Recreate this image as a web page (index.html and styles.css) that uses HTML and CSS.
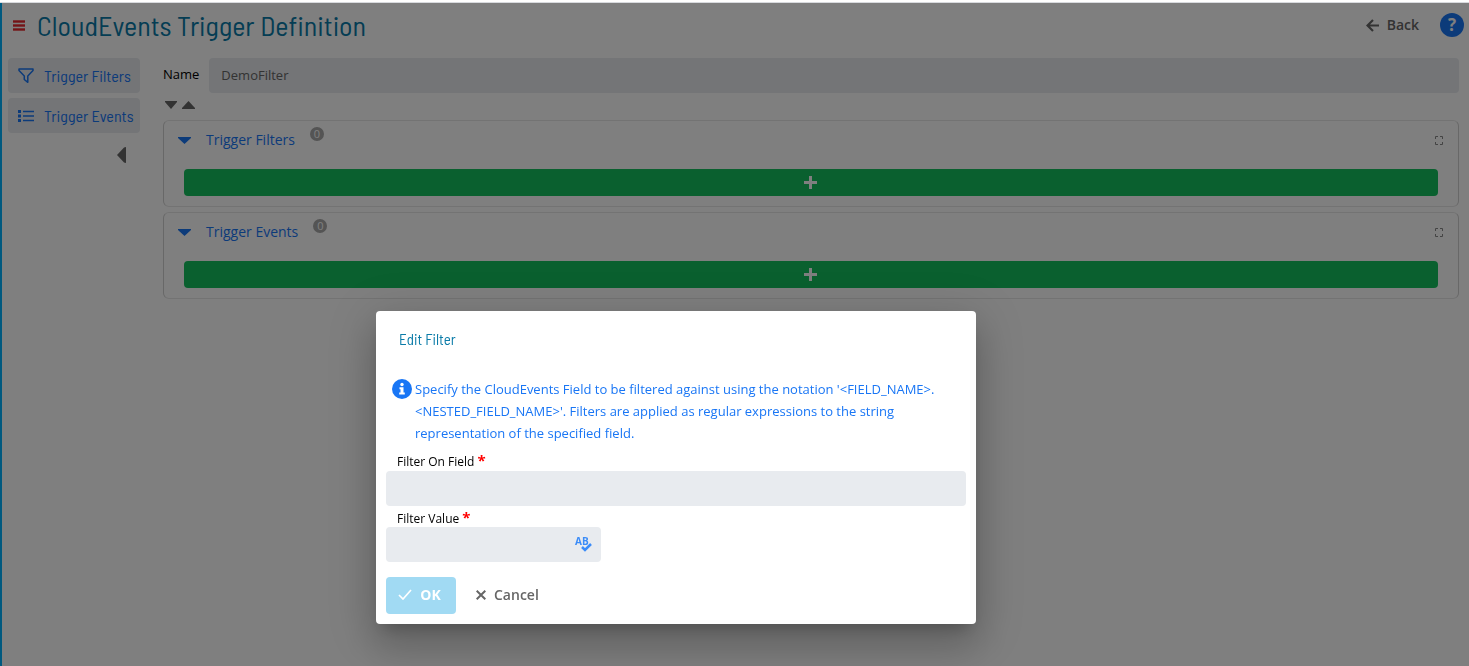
FILE: index.html
```html
<!DOCTYPE html>
<html lang="en">
<head>
<meta charset="utf-8">
<title>CloudEvents Trigger Definition</title>
<link rel="stylesheet" href="styles.css">
</head>
<body>
<div class="page">
  <header class="header">
    <button class="menu" type="button" aria-label="Menu">
      <svg width="12" height="12" viewBox="0 0 12 12"><path d="M0 2.500h12M0 6.500h12M0 10.500h12" stroke="#f08080" stroke-width="3"/><path d="M0 2.500h12M0 6.500h12M0 10.500h12" stroke="#e8262e" stroke-width="1.500"/></svg>
    </button>
    <h1 class="title">CloudEvents Trigger Definition</h1>
    <button class="back" type="button">
      <svg width="13" height="14" viewBox="0 0 13 14" fill="none" stroke="currentColor" stroke-width="2.200"><path d="M7 2L1.500 7.500L7 13M1.500 7.500H13"/></svg>
      Back
    </button>
    <button class="help" type="button" aria-label="Help">?</button>
  </header>
  <div class="body">
    <nav class="sidebar">
      <a class="nav" href="#filters">
        <svg width="16" height="16" viewBox="0 0 16 16" fill="none" stroke="currentColor" stroke-width="1.500" stroke-linejoin="round"><path d="M1 1h14v1.500L9.800 8v6.300L6.300 11.500V8L1 2.500z"/></svg>
        Trigger Filters
      </a>
      <a class="nav" href="#events">
        <svg width="16" height="14" viewBox="0 0 16 14" fill="currentColor"><path d="M0 1h3v3H0zM0 5.500h3v3H0zM0 10h3v3H0zM5 1.800h11v1.500H5zM5 6.300h11v1.500H5zM5 10.800h11v1.500H5z"/></svg>
        Trigger Events
      </a>
      <button class="collapse" type="button" aria-label="Collapse sidebar">
        <svg width="9" height="16" viewBox="0 0 9 16"><path d="M9 0v16L7 15.500L0 8L7 .5z" fill="currentColor"/></svg>
      </button>
    </nav>
    <main class="main">
      <div class="name-row">
        <label for="name">Name</label>
        <input class="name-input" id="name" value="DemoFilter" readonly>
      </div>
      <div class="carets">
        <button type="button" aria-label="Expand all"><svg width="12" height="8" viewBox="0 0 12 8"><path d="M0 0h12v1L6 8L0 1z" fill="currentColor"/></svg></button>
        <button type="button" aria-label="Collapse all"><svg width="13" height="8" viewBox="0 0 13 8"><path d="M0 8h13V7L6.500 0L0 7z" fill="currentColor"/></svg></button>
      </div>
      <section class="panel" id="filters">
        <div class="panel-head">
          <svg width="13" height="8" viewBox="0 0 13 8"><path d="M0 1h13v1L6.500 8L0 2z" fill="currentColor"/></svg>
          <h2>Trigger Filters</h2><span class="count">0</span>
          <button class="expand" type="button" aria-label="Full screen"><svg width="8" height="9" viewBox="0 0 8 9" fill="none" stroke="currentColor"><path d="M.5 3V.5H3M5 .5h2.500V3M7.500 6v2.500H5M3 8.500H.5V6"/></svg></button>
        </div>
        <button class="add" type="button" aria-label="Add filter"><svg width="14" height="13" viewBox="0 0 14 13"><path d="M6.500 0v13M0 6.500h13" stroke="currentColor" stroke-width="3"/></svg></button>
      </section>
      <section class="panel" id="events">
        <div class="panel-head">
          <svg width="13" height="8" viewBox="0 0 13 8"><path d="M0 1h13v1L6.500 8L0 2z" fill="currentColor"/></svg>
          <h2>Trigger Events</h2><span class="count">0</span>
          <button class="expand" type="button" aria-label="Full screen"><svg width="8" height="9" viewBox="0 0 8 9" fill="none" stroke="currentColor"><path d="M.5 3V.5H3M5 .5h2.500V3M7.500 6v2.500H5M3 8.500H.5V6"/></svg></button>
        </div>
        <button class="add" type="button" aria-label="Add event"><svg width="14" height="13" viewBox="0 0 14 13"><path d="M6.500 0v13M0 6.500h13" stroke="currentColor" stroke-width="3"/></svg></button>
      </section>
    </main>
  </div>
</div>
<div class="overlay"></div>
<form class="dialog" role="dialog" aria-labelledby="dialog-title">
  <h2 class="dialog-title" id="dialog-title">Edit Filter</h2>
  <div class="info">
    <svg width="20" height="22" viewBox="0 -1 20 22"><circle cx="10" cy="10" r="10" fill="#1976f5"/><circle cx="10" cy="5.500" r="1.700" fill="#fff"/><path d="M7.500 8.300h4v5.200h1.300v2H7.200v-2h1.300v-3.200h-1z" fill="#fff"/></svg>
    <p>Specify the CloudEvents Field to be filtered against using the notation '&lt;FIELD_NAME&gt;.<br>&lt;NESTED_FIELD_NAME&gt;'. Filters are applied as regular expressions to the string representation of the specified field.</p>
  </div>
  <div class="field">
    <label for="field">Filter On Field <span class="req">*</span></label>
    <input id="field" type="text">
  </div>
  <div class="field field-short">
    <label for="value">Filter Value <span class="req">*</span></label>
    <input id="value" type="text">
    <svg class="spell" width="17" height="20" viewBox="0 0 17 20"><text x="0" y="11" class="spell-text">AB</text><path d="M7 13l3 3l6-6" fill="none" stroke="#3b8cf8" stroke-width="2.500"/></svg>
  </div>
  <div class="actions">
    <button class="ok" type="button"><svg width="14" height="11" viewBox="0 0 14 11"><path d="M1 6l4 4l8-9" fill="none" stroke="currentColor" stroke-width="1.700"/></svg>OK</button>
    <button class="cancel" type="button"><svg width="10" height="10" viewBox="0 0 10 10"><path d="M.7.7l8.600 8.600M9.300.7L.7 9.300" stroke="currentColor" stroke-width="2"/></svg>Cancel</button>
  </div>
</form>
</body>
</html>
```
FILE: styles.css
```css
* { box-sizing: border-box; }
body {
  margin: 0;
  padding-top: 3px;
  background: linear-gradient(#fff 2px, #d8dade 2px, #d8dade 3px, #fff 3px) no-repeat;
  color: #000;
  font: 13px/20px "Open Sans", "Noto Sans", sans-serif;
}
svg { display: block; flex: none; }
button { border: 0; padding: 0; background: none; font: inherit; color: inherit; }
h1, h2, p { margin: 0; font-weight: 400; }
.page { min-height: calc(100vh - 3px); border-left: 2px solid #00b2ff; }
.header { display: flex; align-items: center; height: 43px; padding: 0 5px 0 11px; }
.menu { margin-right: 12px; }
.title {
  flex: 1;
  color: #0a7ba8;
  font: 28px/36px "Barlow Semi Condensed", "Roboto Condensed", "Liberation Sans Narrow", Roboto, sans-serif;
}
.back { display: flex; align-items: center; gap: 8px; color: #666; font-size: 14px; font-weight: 600; }
.help {
  width: 24px;
  height: 24px;
  margin-left: 21px;
  border-radius: 50%;
  background: #1976f5;
  color: #fff;
  font-size: 17px;
  font-weight: 700;
  line-height: 24px;
}
.body { display: flex; gap: 23px; padding: 12px 10px 0 6px; }
.sidebar { display: flex; flex-direction: column; gap: 5px; width: 132px; }
.nav {
  display: flex;
  align-items: center;
  gap: 10px;
  height: 35px;
  padding-left: 10px;
  border-radius: 4px;
  background: #e8ebee;
  color: #1976f5;
  font: 16px/20px "Barlow Semi Condensed", "Roboto Condensed", "Liberation Sans Narrow", Roboto, sans-serif;
  text-decoration: none;
  white-space: nowrap;
}
.collapse { align-self: flex-end; margin: 9px 14px 0 0; color: #666; }
.main { flex: 1; min-width: 0; }
.name-row { display: flex; align-items: center; gap: 10px; }
.name-row label { padding-bottom: 3px; }
input {
  width: 100%;
  height: 35px;
  padding: 0 12px 2px;
  border: 0;
  border-radius: 4px;
  background: #e8ebef;
  color: #666;
  font: inherit;
}
.name-input { flex: 1; }
.carets { display: flex; gap: 5px; padding: 8px 2px 11px; color: #666; }
.panel { margin-bottom: 5px; padding: 0 20px 10px; border: 1px solid #d4d4d4; border-color: #e6e6e6 #d0d0d0; border-radius: 6px; }
.panel-head { display: flex; align-items: center; height: 38px; margin: 0 -6px 10px; color: #1976f5; }
.panel-head h2 { margin-left: 15px; font-size: 14px; line-height: 20px; }
.count {
  width: 14px;
  height: 14px;
  margin: 0 0 12px 15px;
  border-radius: 50%;
  background: #a8a8a8;
  color: #fff;
  font-size: 11px;
  line-height: 14px;
  text-align: center;
}
.expand { margin-left: auto; margin-right: 1px; color: #888; }
.add {
  display: flex;
  align-items: center;
  justify-content: center;
  width: 100%;
  height: 27px;
  border-radius: 4px;
  background: #14c15e;
  color: #fff;
}
.overlay { position: fixed; inset: 3px 0 0; background: rgba(0, 0, 0, .5); }
.dialog {
  position: absolute;
  top: 311px;
  left: 376px;
  width: 600px;
  padding: 17px 10px 10px;
  border-radius: 4px;
  background: #fff;
  box-shadow: 0 11px 15px -7px rgba(0, 0, 0, .2), 0 24px 38px 3px rgba(0, 0, 0, .14), 0 9px 46px 8px rgba(0, 0, 0, .12);
}
.dialog-title {
  padding-left: 13px;
  color: #0a7ba8;
  font: 15px/22px "Barlow Semi Condensed", "Roboto Condensed", "Liberation Sans Narrow", Roboto, sans-serif;
}
.info { display: flex; gap: 3px; margin: 28px 20px 9px 6px; color: #1976f5; line-height: 22px; }
.field { position: relative; margin-bottom: 4px; }
.field label { display: block; height: 17px; padding-left: 11px; font-size: 12px; line-height: 18px; }
.info + .field label { height: 18px; }
.field-short { width: 215px; }
.req { color: #f00; font-size: 15px; font-weight: 700; line-height: 15px; }
.spell { position: absolute; right: 9px; bottom: 8px; }
.spell-text { fill: #3b8cf8; font: 700 10px "Open Sans", sans-serif; }
.actions { display: flex; gap: 20px; margin-top: 15px; font-size: 14px; font-weight: 600; }
.ok, .cancel { display: flex; align-items: center; height: 37px; padding-bottom: 2px; gap: 8px; }
.ok { width: 70px; padding-right: 3px; justify-content: center; border-radius: 4px; background: #a1daf3; color: #fff; font-weight: 700; }
.cancel { color: #666; }
```
